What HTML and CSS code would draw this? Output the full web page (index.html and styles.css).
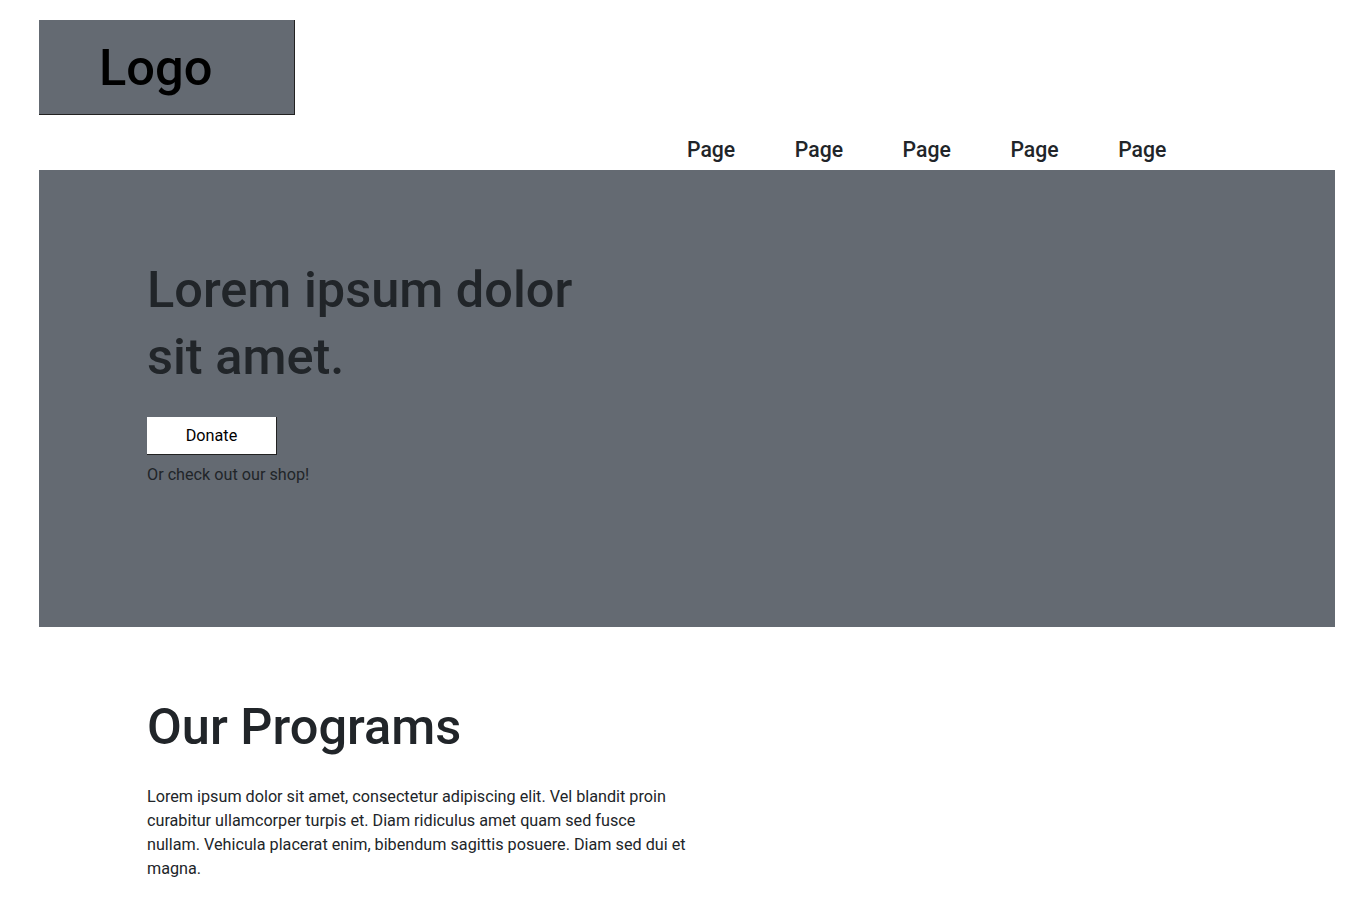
FILE: index.html
```html
<!DOCTYPE html>
<html lang="en">
<head>
<meta charset="utf-8">
<title>Home</title>
<link rel="stylesheet" href="styles.css">
</head>
<body>
<div class="page">
  <header class="header">
    <div class="logo">Logo</div>
    <nav class="nav">
      <a class="nav-link" href="#">Page</a>
      <a class="nav-link" href="#">Page</a>
      <a class="nav-link" href="#">Page</a>
      <a class="nav-link" href="#">Page</a>
      <a class="nav-link" href="#">Page</a>
    </nav>
  </header>
  <section class="hero">
    <h1 class="hero-title">Lorem ipsum dolor sit amet.</h1>
    <button class="donate" type="button">Donate</button>
    <p class="shop">Or check out our shop!</p>
  </section>
  <section class="programs">
    <h2 class="programs-title">Our Programs</h2>
    <p class="programs-text">Lorem ipsum dolor sit amet, consectetur adipiscing elit. Vel blandit proin curabitur ullamcorper turpis et. Diam ridiculus amet quam sed fusce nullam. Vehicula placerat enim, bibendum sagittis posuere. Diam sed dui et magna.</p>
  </section>
</div>
</body>
</html>
```
FILE: styles.css
```css
* { box-sizing: border-box; }
html, body { margin: 0; padding: 0; background: #fff; }
body {
  font-family: Roboto, "Liberation Sans", Arial, sans-serif;
  color: #212529;
  font-size: 16.2px;
  line-height: 1.5;
}
.page {
  padding: 20px 34px 0 39px;
}
.header {
  display: flex;
  flex-direction: column;
}
.logo {
  width: 256px;
  height: 95px;
  background: #646a72;
  border-right: 1px solid #222;
  border-bottom: 1px solid #222;
  color: #000;
  font-size: 50.6px;
  font-weight: 500;
  line-height: 95px;
  padding-left: 60px;
}
.nav {
  display: flex;
  gap: 59.6px;
  padding-left: 648px;
  height: 55px;
  align-items: center;
  padding-top: 14px;
}
.nav-link {
  color: #212529;
  text-decoration: none;
  font-size: 21.2px;
  font-weight: 500;
  line-height: 30px;
}
.hero {
  background: #646a72;
  height: 457px;
  padding: 86px 108px 0;
}
.hero-title {
  margin: 0;
  max-width: 440px;
  font-size: 50.5px;
  font-weight: 500;
  line-height: 67px;
  color: #212529;
}
.donate {
  display: block;
  margin-top: 27px;
  width: 130px;
  height: 38px;
  background: #fff;
  border: none;
  border-right: 1px solid #222;
  border-bottom: 1px solid #222;
  font-family: inherit;
  font-size: 16.2px;
  color: #000;
  padding: 0;
}
.shop {
  margin: 8px 0 0;
  color: #212529;
}
.programs {
  padding: 68px 108px 30px;
}
.programs-title {
  margin: 0;
  font-size: 50.5px;
  font-weight: 500;
  line-height: 64px;
}
.programs-text {
  margin: 26px 0 0;
  max-width: 540px;
  line-height: 24px;
}
```
